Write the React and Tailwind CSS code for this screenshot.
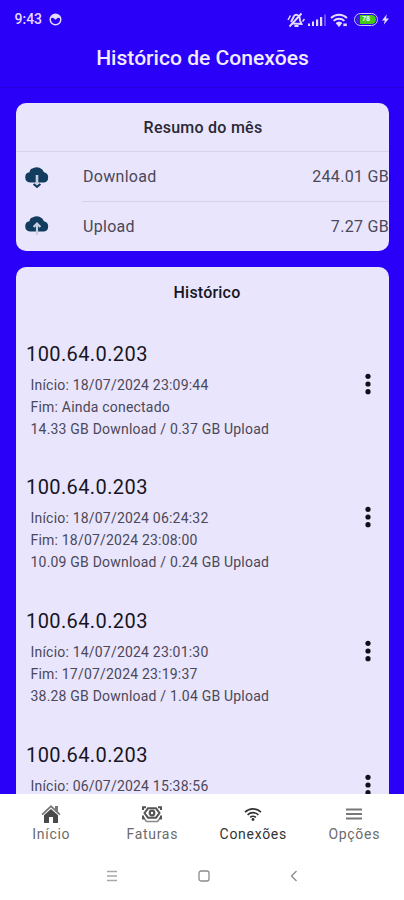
const sessions = [
  {
    ip: '100.64.0.203',
    start: '18/07/2024 23:09:44',
    end: 'Ainda conectado',
    usage: '14.33 GB Download / 0.37 GB Upload',
  },
  {
    ip: '100.64.0.203',
    start: '18/07/2024 06:24:32',
    end: '18/07/2024 23:08:00',
    usage: '10.09 GB Download / 0.24 GB Upload',
  },
  {
    ip: '100.64.0.203',
    start: '14/07/2024 23:01:30',
    end: '17/07/2024 23:19:37',
    usage: '38.28 GB Download / 1.04 GB Upload',
  },
  {
    ip: '100.64.0.203',
    start: '06/07/2024 15:38:56',
  },
];

function CloudIcon({up}) {
  return (
    <svg viewBox="0 0 26 22" className="h-[22px] w-[26px]">
      <path
        d="M6 16.5a5.2 5.2 0 0 1-.5-10.300A4.500 4.500 0 0 1 9 2.300 7.500 7.500 0 0 1 20 6.300 5.200 5.200 0 0 1 20 16.500z"
        fill="#123c5e"
      />
      {up ? (
        <path
          d="M13 20V9M9.600 12 13 8.500l3.400 3.500"
          fill="none"
          stroke="#c6cfdf"
          strokeWidth="2.200"
        />
      ) : (
        <>
          <path d="M13 9v9.500" stroke="#c6cfdf" strokeWidth="2.600" />
          <path
            d="m9.600 18 3.400 2.800 3.400-2.800"
            fill="none"
            stroke="#123c5e"
            strokeWidth="2.200"
          />
        </>
      )}
    </svg>
  );
}

function WifiIcon({className}) {
  return (
    <svg viewBox="0 0 18 14" className={className}>
      <g fill="none" stroke="currentColor" strokeWidth="1.700">
        <path d="M1 5.200a11.400 11.400 0 0 1 16 0" />
        <path d="M3.600 7.900a7.700 7.700 0 0 1 10.800 0" />
        <path d="M6.200 10.400a4 4 0 0 1 5.600 0" />
      </g>
      <circle cx="9" cy="12.500" r="1.400" fill="currentColor" />
    </svg>
  );
}

function StatusBar() {
  return (
    <div className="flex h-[38px] items-center pt-px pr-[15px] pl-[14.500px] text-[#e4dcff]">
      <span className="text-[14px] font-medium">9:43</span>
      <svg viewBox="0 0 14 14" className="ml-[7px] h-[13px] w-[13px]">
        <circle cx="7" cy="7" r="5.700" fill="none" stroke="currentColor" strokeWidth="1.600" />
        <path d="M2 5.500C2.500 2.800 4.500 1.500 7 1.500s4.500 1.300 5 4L9.500 5 7 7.200 4.500 5z" fill="currentColor" />
      </svg>
      <div className="ml-auto flex items-center">
        {/* Muted bell */}
        <svg viewBox="0 0 18 16" className="mr-px h-4 w-[18px]" fill="none" stroke="currentColor">
          <path
            d="M4 10 7 4C8.500 2 11.500 2.500 12.500 5l.5 3.500 1.500 3.500-9.500-.5M7.500 14h4"
            strokeWidth="1.900"
          />
          <path d="M2.500 14.500 14.500 1.500" strokeWidth="1.900" />
          <path d="M1 8l2.500-4.500M15.500 9.500l2-2.500" strokeWidth="1.500" />
        </svg>
        {/* Signal */}
        <svg viewBox="0 0 18 12" className="ml-[2px] h-3 w-[18px]" fill="currentColor">
          <rect x="0" y="9.500" width="2" height="2.500" />
          <rect x="4" y="7.500" width="2" height="4.500" />
          <rect x="8" y="5.500" width="2.200" height="6.500" />
          <rect x="12" y="3" width="2.200" height="9" />
          <rect x="16" y="0.500" width="2" height="11.500" opacity="0.350" />
        </svg>
        {/* Wifi with activity mark */}
        <svg viewBox="0 0 18 14" className="ml-1 h-[14px] w-[18px]" fill="none" stroke="currentColor">
          <path
            d="M1 5a11.500 11.500 0 0 1 16 0M3.600 7.900a7.700 7.700 0 0 1 10.800 0M6.400 10.600a3.800 3.800 0 0 1 5.200 0"
            strokeWidth="1.900"
          />
          <path d="m6.500 10.500 2.500 3 2.500-3z" fill="currentColor" />
          <path d="M13.300 11.800h3.500" strokeWidth="2.600" />
        </svg>
        {/* Battery */}
        <div className="ml-[6px] flex h-[13px] w-[24px] rounded-full border-[1.500px] border-[#cfc8ff] p-[1px]">
          <div className="flex flex-1 items-center justify-center rounded-full bg-linear-to-r from-[#3a20d8] from-20% to-[#45c814] to-20% text-[7px] leading-none font-bold text-white">
            78
          </div>
        </div>
        <svg viewBox="0 0 8 12" className="ml-[4px] h-[11px] w-[7px]" fill="currentColor">
          <path d="M5.500 0 0 7h3.200L2 12l6-7.200H4.600z" />
        </svg>
      </div>
    </div>
  );
}

function SummaryRow({up, label, value}) {
  return (
    <div className="flex h-[49.500px] items-center pl-[8px]">
      <CloudIcon up={up} />
      <div
        className={`ml-[32px] flex h-full flex-1 items-center justify-between pt-[2px] pl-px text-[16px] tracking-[0.300px] text-[#4b4859] ${
          up ? '' : 'border-b border-[#d8d4e8]'
        }`}
      >
        <span>{label}</span>
        <span>{value}</span>
      </div>
    </div>
  );
}

function Session({ip, start, end, usage}) {
  return (
    <div className="flex h-[133.700px] shrink-0 items-start justify-between pr-[17px] pl-[10px]">
      <div>
        <h3 className="text-[20px] leading-[28px] tracking-[0.400px] text-[#17151f]">{ip}</h3>
        <div className="mt-[6px] pl-[4.500px] text-[14px] leading-[22px] tracking-[0.200px] text-[#4b4859]">
          <p>Início: {start}</p>
          {end && <p>Fim: {end}</p>}
          {usage && <p>{usage}</p>}
        </div>
      </div>
      <svg viewBox="0 0 8 22" className="mt-[33px] h-[22px] w-2" fill="#111018">
        <circle cx="4" cy="3.300" r="2.600" />
        <circle cx="4" cy="11" r="2.600" />
        <circle cx="4" cy="18.700" r="2.600" />
      </svg>
    </div>
  );
}

function HomeIcon() {
  return (
    <svg viewBox="0 0 20 18" className="h-[18px] w-5" fill="#4a4a4a">
      <path d="M10 0 .5 9l1.200 1.200L10 2.600l8.300 7.600L19.500 9l-2.500-2.400V1h-3v2.700z" fill="#777" />
      <path d="M10 4 3 10.300V18h5v-6h4v6h5v-7.700z" />
    </svg>
  );
}

function BillsIcon() {
  return (
    <svg viewBox="0 0 20 17" className="h-[17px] w-5" fill="none" stroke="#555">
      <path d="M1 4V1.200h3M16 1.200h3V4M19 9.500v3h-2M3 12.500H1v-3" strokeWidth="2" />
      <path d="M2.500 7 6 2.300h8L17.500 7 14 11.700H6z" strokeWidth="2" />
      <circle cx="10" cy="7" r="2.300" strokeWidth="2.200" />
      <path d="m2.500 13 2 2.500h11l2-2.500" strokeWidth="1.600" stroke="#888" />
    </svg>
  );
}

function MenuIcon() {
  return (
    <svg viewBox="0 0 16 12" className="h-3 w-4" stroke="#777" strokeWidth="1.800">
      <path d="M0 1.500h16M0 6h16M0 10.500h16" />
    </svg>
  );
}

const tabs = [
  {label: 'Início', icon: <HomeIcon />},
  {label: 'Faturas', icon: <BillsIcon />},
  {label: 'Conexões', icon: <WifiIcon className="h-[14px] w-[18px]" />, active: true},
  {label: 'Opções', icon: <MenuIcon />},
];

export default function App() {
  return (
    <div className="flex h-[900px] w-[404px] flex-col overflow-hidden bg-[#2a00f8] font-['Roboto',sans-serif]">
      <header className="h-[88px] shrink-0 border-b border-[#2400dc]">
        <StatusBar />
        <h1 className="pl-px text-center text-[21.100px] leading-[39px] font-medium text-[#f0ebff]">
          Histórico de Conexões
        </h1>
      </header>

      <main className="flex min-h-0 flex-1 flex-col overflow-hidden pt-[15px] pr-[15px] pl-4">
        <section className="h-[148px] shrink-0 overflow-hidden rounded-[10px] bg-[#e9e5fc]">
          <h2 className="h-[49px] border-b border-[#d8d4e8] pl-px text-center text-[16px] leading-[49px] font-medium tracking-[0.250px] text-[#2a2835]">
            Resumo do mês
          </h2>
          <SummaryRow label="Download" value="244.01 GB" />
          <SummaryRow up label="Upload" value="7.27 GB" />
        </section>

        <section className="mt-4 flex min-h-0 flex-1 flex-col overflow-hidden rounded-t-[10px] bg-[#e9e5fc]">
          <h2 className="h-[72.500px] shrink-0 pl-[9px] text-center text-[16px] leading-[51px] font-medium tracking-[0.200px] text-[#17151f]">
            Histórico
          </h2>
          {sessions.map((session) => (
            <Session key={session.start} {...session} />
          ))}
        </section>
      </main>

      <nav className="grid h-[60px] shrink-0 grid-cols-4 bg-white">
        {tabs.map(({label, icon, active}) => (
          <button
            key={label}
            className={`flex flex-col items-center pt-[10px] pl-[1.500px] text-[14px] leading-[20px] tracking-[0.700px] ${
              active ? 'text-[#333]' : 'text-[#6b6b6b]'
            }`}
          >
            <span className="flex h-[20px] items-center">{icon}</span>
            {label}
          </button>
        ))}
      </nav>

      {/* System navigation */}
      <div className="flex h-[46px] shrink-0 items-start justify-between bg-white pt-[16px] pr-[106px] pl-[107px] text-[#8a8a8a]">
        <svg viewBox="0 0 10 12" className="h-3 w-[10px]" stroke="#a8a8a8" strokeWidth="1.400">
          <path d="M0 1.500h10M0 6h10M0 10.500h10" />
        </svg>
        <svg viewBox="0 0 12 12" className="h-3 w-3" fill="none" stroke="currentColor" strokeWidth="1.300">
          <rect x="1" y="1" width="10" height="10" rx="2" />
        </svg>
        <svg viewBox="0 0 8 12" className="h-3 w-2" fill="none" stroke="currentColor" strokeWidth="1.300">
          <path d="M6.500 1 1.500 6l5 5" />
        </svg>
      </div>
    </div>
  );
}
